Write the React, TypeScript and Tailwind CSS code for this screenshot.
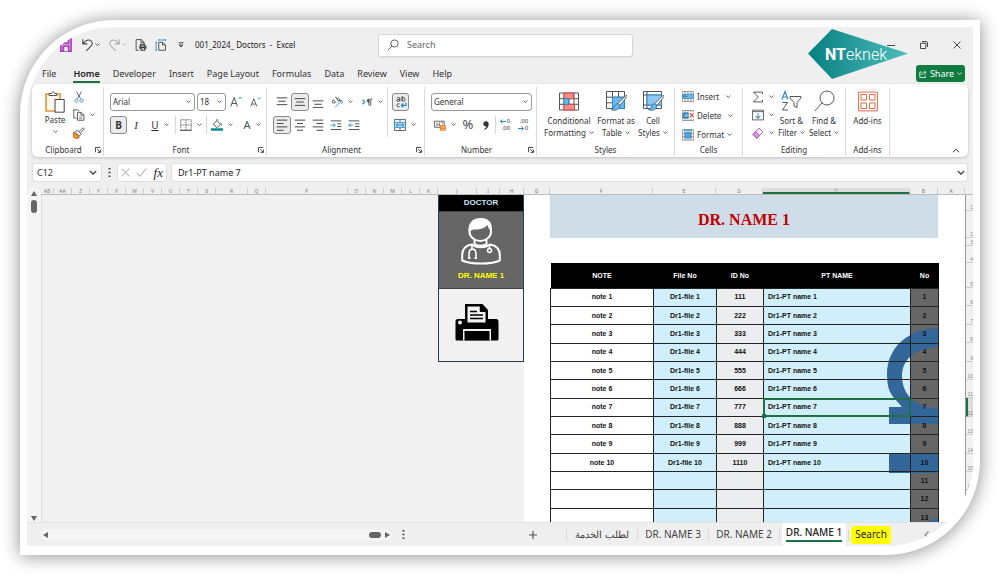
import React, { useState } from "react";

const menuTabs = ["File", "Home", "Developer", "Insert", "Page Layout", "Formulas", "Data", "Review", "View", "Help"];

// Column letters run right to left, P takes up the free space
const columns = [
  { name: "AB", width: "w-[13px]" },
  { name: "AA", width: "w-[18px]" },
  { name: "Z", width: "w-[18px]" },
  { name: "Y", width: "w-[18px]" },
  { name: "X", width: "w-[18px]" },
  { name: "W", width: "w-[18px]" },
  { name: "V", width: "w-[18px]" },
  { name: "U", width: "w-[18px]" },
  { name: "T", width: "w-[18px]" },
  { name: "S", width: "w-[18px]" },
  { name: "R", width: "w-8" },
  { name: "Q", width: "w-[18px]" },
  { name: "P", width: "flex-1" },
  { name: "O", width: "w-[18px]" },
  { name: "N", width: "w-[18px]" },
  { name: "M", width: "w-[18px]" },
  { name: "L", width: "w-[18px]" },
  { name: "K", width: "w-[18px]" },
  { name: "J", width: "w-[39px]" },
  { name: "I", width: "w-[23px]" },
  { name: "H", width: "w-6" },
  { name: "G", width: "w-[26px]" },
  { name: "F", width: "w-[103px]" },
  { name: "E", width: "w-[63px]" },
  { name: "D", width: "w-[47px]" },
  { name: "C", width: "w-[147px]" },
  { name: "B", width: "w-[28px]" },
  { name: "A", width: "w-[27px]" },
];

const topRows = [
  { no: 1, height: "h-4" },
  { no: 2, height: "h-[27px]" },
  { no: 3, height: "h-2" },
  { no: 4, height: "h-[17px]" },
  { no: 5, height: "h-[25px]" },
];

const patients = Array.from({ length: 13 }, (_, i) => {
  const no = i + 1;
  return {
    no,
    note: no <= 10 ? `note ${no}` : "",
    file: no <= 10 ? `Dr1-file ${no}` : "",
    id: no <= 10 ? String(no * 111) : "",
    name: no <= 10 ? `Dr1-PT name ${no}` : "",
  };
});

const Chevron = ({ size = "w-[5px]" }: { size?: string }) => (
  <svg viewBox="0 0 6 4" className={`${size} shrink-0`} fill="none" stroke="#444" strokeWidth="1">
    <path d="M.6.7 3 3 5.4.7" />
  </svg>
);

interface IconProps {
  children: React.ReactNode;
  box?: string;
  size?: string;
}

// Thin line icon, 16 units wide unless told otherwise
const Icon: React.FC<IconProps> = ({ children, box = "0 0 16 16", size = "w-3 h-3" }) => (
  <svg viewBox={box} className={`${size} shrink-0`} fill="none" stroke="#555" strokeWidth="1.2">
    {children}
  </svg>
);

const Lines = ({ d }: { d: string }) => (
  <Icon>
    <path d={d} stroke="#444" strokeWidth="1.3" />
  </Icon>
);

interface ToolProps {
  label: string;
  width?: string;
  active?: boolean;
  children: React.ReactNode;
}

const Tool: React.FC<ToolProps> = ({ label, width = "w-[18px]", active = false, children }) => (
  <button
    type="button"
    aria-label={label}
    className={`${width} h-[18px] flex shrink-0 items-center justify-center gap-[5px] ${
      active ? "rounded-[3px] border border-[#8a8a8a] bg-[#ebebeb]" : ""
    }`}
  >
    {children}
  </button>
);

const Divider = ({ height = "h-[18px]" }: { height?: string }) => (
  <span className={`${height} w-px shrink-0 bg-[#d8d8d8]`} />
);

interface GroupProps {
  title: string;
  width: string;
  launcher?: boolean;
  children: React.ReactNode;
}

const Group: React.FC<GroupProps> = ({ title, width, launcher = false, children }) => (
  <section className={`${width} flex shrink-0 flex-col pt-[3px] pb-px`}>
    <div className="flex-1 min-h-0 flex border-r border-[#dcdcdc]">{children}</div>
    <div className="h-3 shrink-0 flex items-center border-r border-[#dcdcdc]">
      <h2 className="flex-1 text-center whitespace-nowrap">{title}</h2>
      {launcher && (
        <button type="button" aria-label={`${title} settings`} className="w-2">
          <Icon box="0 0 8 8" size="w-[6px] h-[6px]">
            <path d="M.6 7V.6H7M3 3l4 4M7.2 3.5v3.7H3.5" stroke="#333" />
          </Icon>
        </button>
      )}
    </div>
  </section>
);

interface BigToolProps {
  lines: string[];
  chevron?: boolean;
  width: string;
  children: React.ReactNode;
}

const BigTool: React.FC<BigToolProps> = ({ lines, chevron = true, width, children }) => (
  <button type="button" className={`${width} flex shrink-0 flex-col items-center leading-3`}>
    <span className="h-7 flex items-center">{children}</span>
    {lines.map((line, i) => (
      <span key={line} className="flex items-center gap-[3px] whitespace-nowrap">
        {line}
        {chevron && i === lines.length - 1 && <Chevron />}
      </span>
    ))}
  </button>
);

const TitleBar = () => (
  <header className="h-9 shrink-0 flex items-center pl-[33px] text-[8px]">
    <div className="flex items-center gap-2">
      <button type="button" aria-label="Save">
        <svg viewBox="0 0 13 14" className="w-[13px] h-[14px]" fill="#d487de" stroke="#a63fb5" strokeWidth="1.4">
          <path d="M.7 13.2V3.5L3.500.8h7.700v12.400z" />
          <path d="M3.500.8V5h5V.8" fill="#efefef" />
          <path d="M3.500 13.200V8.400h5v4.800" fill="#efefef" />
        </svg>
      </button>
      <button type="button" aria-label="Undo" className="flex items-center gap-px">
        <Icon size="w-[13px] h-[14px]">
          <path d="M2.2 1v5.6h5.6M2.5 6.3C5 3 7.5 1.6 10 1.9c3.4.4 5 4.400 2.800 7L6.500 15.300" stroke="#444" strokeWidth="1.3" />
        </Icon>
        <Chevron />
      </button>
      <button type="button" aria-label="Redo" disabled className="flex items-center gap-px opacity-40">
        <Icon size="w-[13px] h-[14px]">
          <path d="M13.800 1v5.600H8.200M13.500 6.300C11 3 8.500 1.600 6 1.900c-3.400.4-5 4.400-2.800 7l6.300 6.400" stroke="#444" strokeWidth="1.3" />
        </Icon>
        <Chevron />
      </button>
      <button type="button" aria-label="Print preview">
        <Icon size="w-3 h-[14px]">
          <path d="M5 15H1.500V.8h7l3.500 3.400V7M8 1v3.700h3.500" stroke="#444" />
          <path d="M7.500 9V7h5v2M6.500 13V9.300h8V13M8 11.500h5v3.500H8z" stroke="#333" strokeWidth="1.400" />
        </Icon>
      </button>
      <button type="button" aria-label="Page size">
        <Icon size="w-3 h-[14px]">
          <path d="M5 4.500h5l4 3.500v7H5zM10 4.500V8h4" stroke="#444" />
          <path d="M1.500 4v11M.3 4.300h2.500M.3 15h2.500M5 1.300h9M5.200 0v2.600M14 0v2.600" stroke="#2b8bc9" />
        </Icon>
      </button>
      <button type="button" aria-label="Customize toolbar" className="px-[3px]">
        <Icon box="0 0 6 6" size="w-[6px] h-[6px]">
          <path d="M.5.800h5M1 3l2 2 2-2z" stroke="#333" strokeWidth=".9" />
        </Icon>
      </button>
      <h1 className="w-[183px] text-[#222]">001_2024_ Doctors&nbsp; -&nbsp; Excel</h1>
    </div>
    <label className="w-[255px] h-[23px] flex items-center gap-2 rounded-[3px] border border-[#d6d6d6] bg-white px-2 shadow-xs">
      <Icon>
        <circle cx="10" cy="6" r="4.800" />
        <path d="M6.500 9.500 1 15" />
      </Icon>
      <input type="search" aria-label="Search" placeholder="Search" className="w-full text-[9px] outline-none placeholder:text-[#666]" />
    </label>
    <div className="flex-1" />
    <div className="flex items-center">
      <button type="button" aria-label="Minimize" className="w-[33px] flex justify-center">
        <span className="w-2 h-px bg-[#444]" />
      </button>
      <button type="button" aria-label="Restore" className="w-[33px] flex justify-center">
        <Icon box="0 0 8 8" size="w-2 h-2">
          <path d="M.5 2.200h5.300v5.300H.5zM2 .6h4.300Q7.500.6 7.500 2v4" stroke="#333" strokeWidth=".9" />
        </Icon>
      </button>
      <button type="button" aria-label="Close" className="w-[33px] flex justify-center">
        <Icon box="0 0 8 8" size="w-2 h-2">
          <path d="m.5.5 7 7m0-7-7 7" stroke="#333" strokeWidth=".9" />
        </Icon>
      </button>
    </div>
  </header>
);

const MenuBar = () => (
  <nav className="h-[21px] shrink-0 flex items-center justify-between pl-[15px] pr-2 text-[9px] text-[#333]">
    <div className="flex gap-[13px] pt-px">
      {menuTabs.map((tab) => (
        <button key={tab} type="button" className="first:mr-1">
          <span
            className={`block leading-[15px] border-b-2 ${
              tab === "Home" ? "border-[#1e7145] font-semibold text-[#222]" : "border-transparent"
            }`}
          >
            {tab}
          </span>
        </button>
      ))}
    </div>
    <button type="button" className="w-[49px] h-[17px] flex items-center justify-center gap-[3px] rounded-[3px] bg-[#107c41] text-white">
      <svg viewBox="0 0 10 10" className="w-2 h-2" fill="none" stroke="white" strokeWidth="1">
        <path d="M3.500 2.500H1v7h7V7M3 6.500C3.500 4 5 3.200 7 3.200M6 .8l3 2.500-3 2.500" />
      </svg>
      Share
      <svg viewBox="0 0 6 4" className="w-[5px]" fill="none" stroke="white">
        <path d="M.6.7 3 3 5.400.7" />
      </svg>
    </button>
  </nav>
);

const GridIcon = ({ size = "w-5 h-[19px]", children }: { size?: string; children?: React.ReactNode }) => (
  <svg viewBox="0 0 20 18" className={`${size} shrink-0`} fill="none" stroke="#555" strokeWidth="1">
    <path d="M.5.500h19v17H.5zM.5 6.200h19M.5 11.800h19M5 .5v17M15 .5v17M10 .5v17" fill="white" />
    {children}
  </svg>
);

const brush = (
  <g>
    <path d="M20.500 4 12 12.500l2 2L21 5.500z" fill="white" stroke="#555" strokeWidth=".9" />
    <path d="M11.500 12.500C8.500 13 9 17 5.500 18.800c3.500 1 7.500.2 8.500-4z" fill="#6cb8f0" stroke="#3b6f9c" strokeWidth=".9" />
  </g>
);

const Ribbon = () => {
  const [font, setFont] = useState("Arial");
  const [fontSize, setFontSize] = useState("18");
  const [format, setFormat] = useState("General");
  const selectClass = "h-[18px] w-full appearance-none rounded-[3px] border border-[#999] bg-white pl-[2px] outline-none";

  return (
    <div className="mx-[5px] h-[73px] shrink-0 flex rounded-md bg-white text-[8px] text-[#333] shadow-[0_1px_3px_rgba(0,0,0,0.2)]">
      <Group title="Clipboard" width="w-[72px]" launcher>
        <div className="flex pl-[9px] gap-1">
          <button type="button" className="w-7 flex flex-col items-center">
            <svg viewBox="0 0 20 22" className="mt-1 w-5 h-[22px] shrink-0" fill="none">
              <path d="M1 3h14v17H1z" stroke="#e8912d" strokeWidth="1.600" fill="#fff8ee" />
              <path d="M4 4.500V2.500h2.500C7 .3 9.500.3 10 2.500H12v2z" stroke="#555" fill="white" />
              <path d="M10 8.500h9.200v12.700H10z" stroke="#444" fill="white" />
            </svg>
            <span className="leading-3 mt-px">Paste</span>
            <span className="h-3 flex items-center"><Chevron /></span>
          </button>
          <div className="flex flex-col pt-px">
            <Tool label="Cut" width="w-3">
              <Icon>
                <path d="M4.500.8 10 10M11.500.8 6 10" />
                <path d="M4.500 10.500a2.200 2.200 0 1 0 .1 0zM11.500 10.500a2.200 2.200 0 1 0 .1 0z" stroke="#2b8bc9" />
              </Icon>
            </Tool>
            <Tool label="Copy" width="w-[22px]">
              <Icon>
                <path d="M5 12H1V1h5.500l2 2M6 4.500h5l3.500 3.500v7H6zM10.500 4.500V8h4" />
                <path d="M8 10.500h4.500M8 12.700h4.500" strokeWidth=".8" />
              </Icon>
              <Chevron />
            </Tool>
            <Tool label="Format painter" width="w-3">
              <Icon>
                <path d="M1 7.500 8 13l-2.500 2.500L1 13.500z" fill="#f6a04d" stroke="#e07b1c" strokeWidth="2" />
                <path d="M3 6.500 5.500 4l5.500 5.500-2.500 2.500zM8 6l5.500-5 1.500 1.500L10 8" stroke="#555" fill="white" />
              </Icon>
            </Tool>
          </div>
        </div>
      </Group>

      <Group title="Font" width="w-[163px]" launcher>
        <div className="flex flex-col gap-[5px] pl-[6px] pt-[6px]">
          <div className="flex items-center">
            <span className="relative w-[85px]">
              <select aria-label="Font" value={font} onChange={(e) => setFont(e.target.value)} className={selectClass}>
                <option>Arial</option>
                <option>Calibri</option>
              </select>
              <span className="pointer-events-none absolute right-1 top-[7px]"><Chevron /></span>
            </span>
            <span className="relative ml-[2px] w-[29px]">
              <select aria-label="Font size" value={fontSize} onChange={(e) => setFontSize(e.target.value)} className={selectClass}>
                <option>18</option>
                <option>20</option>
              </select>
              <span className="pointer-events-none absolute right-1 top-[7px]"><Chevron /></span>
            </span>
            <Tool label="Increase font size" width="w-5">
              <Icon size="w-3 h-[14px]">
                <path d="m1 14 4.500-12L10 14M2.500 10h6" stroke="#444" />
                <path d="m11.500 4 2-2.500 2 2.500" stroke="#2b8bc9" />
              </Icon>
            </Tool>
            <Tool label="Decrease font size" width="w-[18px]">
              <Icon size="w-[11px] h-3">
                <path d="m1 14.500 4.500-11L10 14.500M2.500 11h6" stroke="#444" />
                <path d="m11.500 1.500 2 2.500 2-2.500" stroke="#2b8bc9" />
              </Icon>
            </Tool>
          </div>
          <div className="flex items-center">
            <Tool label="Bold" active width="w-[17px]"><b className="text-[10px]">B</b></Tool>
            <Tool label="Italic"><i className="font-[Liberation_Serif] text-[11px]">I</i></Tool>
            <Tool label="Underline" width="w-[30px]"><u className="text-[10px]">U</u><Chevron /></Tool>
            <Divider />
            <Tool label="Borders" width="w-[30px]">
              <Icon>
                <path d="M1 1h14v14M1 1v14M8 1v14M1 8h14" stroke="#666" strokeDasharray="2 1" />
                <path d="M.5 15h15" stroke="#333" strokeWidth="1.500" />
              </Icon>
              <Chevron />
            </Tool>
            <Divider />
            <Tool label="Fill color" width="w-[30px]">
              <Icon>
                <path d="M3 7 8 2l4.500 5L8 11.500zM8 2V0" stroke="#444" />
                <path d="M13 5.500c1.500 2 1.500 4 0 4" stroke="#2b8bc9" />
                <path d="M0 14h16" stroke="#0f8b8d" strokeWidth="3.500" />
              </Icon>
              <Chevron />
            </Tool>
            <Tool label="Font color" width="w-[30px]"><span className="text-[11px] text-[#555]">A</span><Chevron /></Tool>
          </div>
        </div>
      </Group>

      <Group title="Alignment" width="w-[158px]" launcher>
        <div className="flex flex-col gap-[5px] pl-[6px] pt-[6px]">
          <div className="flex items-center">
            <Tool label="Top align"><Lines d="M1 2.500h14M3 7h10M1 11.500h14" /></Tool>
            <Tool label="Middle align" active><Lines d="M1 3.500h14M3 8h10M1 12.500h14" /></Tool>
            <Tool label="Bottom align"><Lines d="M1 6.500h14M3 11h10M1 15.500h14" /></Tool>
            <Tool label="Orientation" width="w-[30px]">
              <Icon>
                <path d="M5.500 15 14 6.500M10 6h4.500v4.500" stroke="#2b8bc9" />
                <path d="M3.500 5.500a2 2 0 1 0 2 2.500M3 5l4 4M6 1l4 6M8.500 3.500a2 2 0 1 1 1 3.500" stroke="#444" />
              </Icon>
              <Chevron />
            </Tool>
            <Tool label="Text direction" width="w-[30px]">
              <Icon>
                <path d="m2 5 3 3-3 3" stroke="#2b8bc9" strokeWidth="1.500" />
                <path d="M10.500 13V4M13 13V4h2" stroke="#444" />
                <path d="M10.500 4a2.200 2.200 0 0 0 0 4.500z" fill="#444" />
              </Icon>
              <Chevron />
            </Tool>
          </div>
          <div className="flex items-center">
            <Tool label="Align left" active><Lines d="M1 1.500h14M1 6h9M1 10.500h14M1 15h9" /></Tool>
            <Tool label="Center"><Lines d="M1 1.500h14M4 6h8M1 10.500h14M4 15h8" /></Tool>
            <Tool label="Align right"><Lines d="M1 1.500h14M6 6h9M1 10.500h14M6 15h9" /></Tool>
            <Tool label="Decrease indent">
              <Icon>
                <path d="M1 2.500h14M9.500 6.500H15M9.500 10H15M1 14h14" stroke="#444" />
                <path d="M1 8.200h6M4.500 5.700 7 8.200l-2.500 2.500" stroke="#2b8bc9" />
              </Icon>
            </Tool>
            <Tool label="Increase indent">
              <Icon>
                <path d="M1 2.500h14M9.500 6.500H15M9.500 10H15M1 14h14" stroke="#444" />
                <path d="M1 8.200h6M3.500 5.700 1 8.200l2.500 2.500" stroke="#2b8bc9" />
              </Icon>
            </Tool>
          </div>
        </div>
        <div className="flex-1" />
        <Divider height="h-[50px]" />
        <div className="flex flex-col gap-[5px] w-9 pl-1 pt-[6px]">
          <Tool label="Wrap text" active width="w-[17px]">
            <Icon>
              <path d="M6.500 7V3.500Q6.500 2 4.500 2 3 2 2.500 3M6.500 4.500C4 4.500 2.500 4.500 2.500 6S5 7.500 6.500 5.500M9.500 0v7M9.500 4c0-2.500 4-2.500 4 .500s-4 3-4 .5" stroke="#333" />
              <path d="M6 10.500c-4-1.500-5 4.500 0 4" stroke="#333" />
              <path d="M14.500 9v3.500H8.500M11 10l-2.500 2.500L11 15" stroke="#2b8bc9" strokeWidth="1.600" />
            </Icon>
          </Tool>
          <Tool label="Merge and center" width="w-[26px]">
            <Icon>
              <path d="M.6.600h14.800v14.800H.6zM8 .6v14.800" />
              <path d="M.6 4.500h14.800v7H.6z" fill="#bfe0f7" stroke="#2b8bc9" />
              <path d="M3 8h10M5 6 3 8l2 2M11 6l2 2-2 2" stroke="#1f6fb0" />
            </Icon>
            <Chevron />
          </Tool>
        </div>
      </Group>

      <Group title="Number" width="w-[112px]" launcher>
        <div className="flex-1 flex flex-col gap-[5px] pr-1 pl-[6px] pt-[6px]">
          <span className="relative">
            <select aria-label="Number format" value={format} onChange={(e) => setFormat(e.target.value)} className={selectClass}>
              <option>General</option>
              <option>Number</option>
            </select>
            <span className="pointer-events-none absolute right-1 top-[7px]"><Chevron /></span>
          </span>
          <div className="flex items-center">
            <Tool label="Currency" width="w-7">
              <Icon>
                <path d="M.6 3h13v8H.6zM3 5l2 3-2 1M7 4.500v5M10 5h2" />
                <path d="M8.500 8.500h6.500v6.500H8.500zM8.500 10.700H15M8.500 12.800H15" fill="#fbd3a6" stroke="#e07b1c" />
              </Icon>
              <Chevron />
            </Tool>
            <Tool label="Percent" width="w-[18px]"><span className="text-[13px] text-[#444]">%</span></Tool>
            <Tool label="Comma style" width="w-[18px]">
              <svg viewBox="0 0 6 9" className="w-[6px] h-[9px]" fill="#333">
                <path d="M3 .3C5 .3 5.800 1.800 5.700 3.600 5.500 6 4 8 1.500 8.800L1.200 8C2.600 7.300 3.300 6.300 3.400 5.300 1.500 5.600.3 4.400.3 3 .3 1.500 1.400.3 3 .3z" />
              </svg>
            </Tool>
            <Divider />
            <Tool label="Increase decimal">
              <span className="flex flex-col items-end text-[6px] leading-[7px]">
                <span className="flex items-center gap-px">
                  <svg viewBox="0 0 6 5" className="w-[6px]" fill="none" stroke="#2b8bc9"><path d="M.5 2.500H6M2.500.5l-2 2 2 2" /></svg>
                  0
                </span>
                <span>.00</span>
              </span>
            </Tool>
            <Tool label="Decrease decimal">
              <span className="flex flex-col items-end text-[6px] leading-[7px]">
                <span>.00</span>
                <span className="flex items-center gap-px">
                  <svg viewBox="0 0 6 5" className="w-[6px]" fill="none" stroke="#2b8bc9"><path d="M0 2.500h5.500M3.500.5l2 2-2 2" /></svg>
                  0
                </span>
              </span>
            </Tool>
          </div>
        </div>
      </Group>

      <Group title="Styles" width="w-[138px]">
        <div className="flex pl-1">
          <BigTool lines={["Conditional", "Formatting"]} width="w-14">
            <GridIcon>
              <path d="M5 .5h9.500v5.700H5zM5 11.800h10.500v5.700H5z" fill="#ff8a8a" stroke="#d94343" />
              <path d="M5 6.200h4.500v5.600H5z" fill="#6cb8f0" stroke="#2b8bc9" />
            </GridIcon>
          </BigTool>
          <BigTool lines={["Format as", "Table"]} width="w-[38px]">
            <svg viewBox="0 0 21 20" className="w-[21px] h-5" fill="none" stroke="#555">
              <path d="M.5.500h18v17H.5zM.5 6.200h18M.5 11.800h18M6.500.5v17M12.500.5v17" />
              <path d="M6.500 6.200h12v11.300h-12z" fill="#6cb8f0" stroke="#2b8bc9" />
              {brush}
            </svg>
          </BigTool>
          <BigTool lines={["Cell", "Styles"]} width="w-[36px]">
            <svg viewBox="0 0 21 20" className="w-[21px] h-5" fill="none" stroke="#555">
              <path d="M.5.500h18v17H.5zM.5 4h18M.5 14h18M4 .5v17" />
              <path d="M4 4h14.500v10H4z" fill="#8ec8f5" stroke="#2b8bc9" />
              {brush}
            </svg>
          </BigTool>
        </div>
      </Group>

      <Group title="Cells" width="w-[68px]">
        <div className="flex flex-col items-start pl-[7px]">
          <button type="button" className="h-[19px] flex items-center gap-[3px]">
            <GridIcon size="w-3 h-[11px]">
              <path d="M6 5h13.500v7H6z" fill="#6cb8f0" stroke="#2b8bc9" />
              <path d="M10 8.500H0M4 5 .5 8.500 4 12" stroke="#2b8bc9" strokeWidth="1.800" />
            </GridIcon>
            Insert
            <span className="pl-1"><Chevron /></span>
          </button>
          <button type="button" className="h-[19px] flex items-center gap-[3px]">
            <GridIcon size="w-3 h-[11px]">
              <path d="M3 5h8v8H3z" fill="#6cb8f0" stroke="#1f6fb0" strokeWidth="2" />
              <path d="M11 3h9v12h-9z" fill="white" stroke="none" />
              <path d="m13 5 6.500 7m0-7L13 12" stroke="#e04848" strokeWidth="2" />
            </GridIcon>
            Delete
            <span className="pl-1"><Chevron /></span>
          </button>
          <button type="button" className="h-[19px] flex items-center gap-[3px]">
            <GridIcon size="w-3 h-3">
              <path d="M5 5h10v9H5z" fill="#4ea5e8" stroke="#1f6fb0" />
              <path d="M3 1h14" stroke="#2b8bc9" strokeWidth="2" />
            </GridIcon>
            Format
            <Chevron />
          </button>
        </div>
      </Group>

      <Group title="Editing" width="w-[103px]">
        <div className="flex pl-[7px]">
          <div className="flex flex-col pt-px">
            <Tool label="AutoSum" width="w-[25px]">
              <Icon>
                <path d="M14 4V1.500H2L8.500 8 2 14.500h12V12" stroke="#444" />
              </Icon>
              <Chevron />
            </Tool>
            <Tool label="Fill" width="w-[25px]">
              <Icon>
                <path d="M.6 1.500h14.800v13H.6zM.6 3.500h14.800" />
                <path d="M8 5.500v7M5 9.500l3 3 3-3" stroke="#2b8bc9" strokeWidth="1.400" />
              </Icon>
              <Chevron />
            </Tool>
            <Tool label="Clear" width="w-[25px]">
              <Icon>
                <path d="m1.500 10 8-8.500 5 5-8 8.500z" stroke="#a63fb5" />
                <path d="m1.500 10 3.500-3.800 5 5-3.500 3.800z" fill="#d79be0" stroke="#a63fb5" />
              </Icon>
              <Chevron />
            </Tool>
          </div>
          <BigTool lines={["Sort &", "Filter"]} width="w-[33px]">
            <svg viewBox="0 0 21 22" className="w-[21px] h-[22px]" fill="none" stroke="#555">
              <path d="m1 9.500 3-8 3 8M2 7h4" stroke="#2b8bc9" strokeWidth="1.200" />
              <path d="M1.500 12.500h5l-5 7.500h5.500" />
              <path d="M9 6.500h11v1.500l-4 4.500v5l-3-1.500v-3.500L9 8z" />
            </svg>
          </BigTool>
          <BigTool lines={["Find &", "Select"]} width="w-[32px]">
            <svg viewBox="0 0 21 22" className="w-[21px] h-[22px]" fill="none" stroke="#555">
              <circle cx="13" cy="8" r="7" />
              <path d="M8 13 .8 21" />
            </svg>
          </BigTool>
        </div>
      </Group>

      <Group title="Add-ins" width="w-[44px]">
        <BigTool lines={["Add-ins"]} chevron={false} width="w-[43px]">
          <svg viewBox="0 0 20 20" className="w-5 h-[21px]" fill="none" stroke="#dd6a4a">
            <path d="M.6.600h18.800v18.800H.6z" />
            <path d="M3 3h5.500v5.500H3zM11.500 3H17v5.500h-5.500zM3 11.500h5.500V17H3zM11.500 11.500H17V17h-5.500z" />
          </svg>
        </BigTool>
      </Group>

      <div className="flex-1 flex items-end justify-end pb-1 pr-2">
        <button type="button" aria-label="Collapse ribbon">
          <svg viewBox="0 0 8 5" className="w-2" fill="none" stroke="#444"><path d="m.8 4.200 3.200-3 3.200 3" /></svg>
        </button>
      </div>
    </div>
  );
};

const FormulaBar = () => (
  <div className="h-[31px] shrink-0 flex items-center gap-1 pl-[5px] pr-[5px] text-[9px]">
    <label className="w-[70px] h-[19px] flex items-center rounded-[3px] border border-[#dedede] bg-white px-1">
      <input aria-label="Name box" defaultValue="C12" className="min-w-0 flex-1 text-[#333] outline-none" />
      <Chevron size="w-2" />
    </label>
    <svg viewBox="0 0 2 9" className="w-[7px] h-[9px]" fill="#444">
      <path d="M0 0h2v1.500H0zM0 3.700h2v1.500H0zM0 7.400h2V8.900H0z" />
    </svg>
    <div className="w-[50px] h-[19px] flex items-center justify-between rounded-[3px] border border-[#dedede] bg-white px-[3px]">
      <button type="button" aria-label="Cancel">
        <Icon box="0 0 10 10" size="w-[9px] h-[9px]"><path d="m.7.700 8.600 8.600m0-8.600L.7 9.300" stroke="#bbb" /></Icon>
      </button>
      <button type="button" aria-label="Enter">
        <Icon box="0 0 12 10" size="w-[11px] h-[9px]"><path d="m.7 5.500 3.500 3.500L11.300.700" stroke="#bbb" /></Icon>
      </button>
      <button type="button" aria-label="Insert function" className="font-[Liberation_Serif] text-[13px] leading-4 text-[#222]">
        <i>fx</i>
      </button>
    </div>
    <label className="flex-1 h-[19px] flex items-center rounded-[3px] border border-[#dedede] bg-white pl-[6px] pr-[2px]">
      <input aria-label="Formula" defaultValue="Dr1-PT name 7" className="min-w-0 flex-1 text-[#222] outline-none" />
      <Chevron size="w-2" />
    </label>
  </div>
);

const DoctorCard = () => (
  <aside className="w-[86px] self-start h-[167px] flex flex-col border border-t-0 border-[#1f4058] text-center text-[8px] font-bold">
    <p className="h-4 leading-4 bg-black text-[#c9e4f2]">DOCTOR</p>
    <div className="h-[78px] flex flex-col items-center bg-[#666] border-y border-[#444] pt-[5px] text-[#ff0]">
      <svg viewBox="0 0 40 48" className="w-10 h-12" fill="none" stroke="white" strokeWidth="2">
        <path d="M8.500 11v4c0 4.500 5 9 10.800 9s10.700-4.500 10.700-9v-4" />
        <path d="M8 15C6.500 8 10 1 19.500 1S32 7.500 30.500 14c-2-1-3.500-3-4-6-3.500 3.500-7 4.500-12 4.500-3 0-4.500.5-5.500 2.500z" fill="white" stroke="none" />
        <path d="M13.500 23v4.500c3 1.500 9 1.500 12 0V23" />
        <path d="M11 27.500C4 28.500 1.200 32 1.200 38v5.500C6 46 12 46.500 20 46.500s14-.5 18.800-3V38c0-6-3-9.500-10-10.500-4 3.500-14 3.500-17.800 0z" />
        <path d="M11 27v5M8 40.500V37c0-6.500 7-6.500 7 0v3.500M28.500 27v5" strokeWidth="1.600" />
        <path d="M7 41h2.500M13.500 41H16" strokeWidth="2" />
        <circle cx="28.500" cy="33.500" r="2" strokeWidth="1.500" />
      </svg>
      <button type="button" className="mt-[5px]">DR. NAME 1</button>
    </div>
    <button type="button" aria-label="Print" className="flex-1 flex justify-center pt-[14px]">
      <svg viewBox="0 0 44 38" className="-ml-2 w-11 h-[38px]">
        <path d="M3 16h38a2.500 2.500 0 0 1 2.500 2.500V36a1.500 1.500 0 0 1-1.500 1.500H2A1.500 1.500 0 0 1 .5 36V18.500A2.500 2.500 0 0 1 3 16z" />
        <path d="M8 26h28v11.500H8z" fill="#f1f1f1" />
        <path d="M9.500 28h25v9.500h-25z" />
        <circle cx="5" cy="19.500" r="2" fill="#f1f1f1" />
        <path d="M10 1h17.500L33 7v15H10z" />
        <path d="M12.500 3.500h12.300V9h5.700v10.500H12.500z" fill="#f1f1f1" />
        <path d="M15 8.500h7M15 12h13M15 15.500h13" stroke="black" strokeWidth="1.500" />
      </svg>
    </button>
  </aside>
);

const PatientTable = () => {
  const cell = "border border-[#222] p-0 pt-px h-[18px]";

  return (
    <div className="relative isolate">
      {/* Column fills and watermark lie under the table text and lines */}
      <div className="absolute inset-0 -z-10 flex">
        <div className="w-[103px] bg-white" />
        <div className="w-[63px] bg-[#d0effb]" />
        <div className="w-[47px] bg-[#ebedee]" />
        <div className="w-[147px] bg-[#d0effb]" />
        <div className="flex-1 bg-[#666]" />
      </div>
      <svg viewBox="0 0 52 200" className="absolute right-0 top-[64px] -z-10 w-[52px] h-[200px]" fill="#336699">
        <path d="M52 1C22 2 1 20 1 48c0 12 3 19 8 24l7 8H3v17h49V81c-10 0-19-3-26-9-6-5-10-13-10-23 0-17 14-28 36-29z" />
        <path d="M3 127h49v19H3zM38 198c4-5 8-6 14-6v8H38z" />
      </svg>
      <table className="w-full h-[264px] table-fixed border-collapse text-center text-[7px] font-bold text-[#111]">
        <colgroup>
          <col className="w-[103px]" />
          <col className="w-[63px]" />
          <col className="w-[47px]" />
          <col className="w-[147px]" />
          <col className="w-[28px]" />
        </colgroup>
        <thead>
          <tr className="h-[25px] bg-black text-white">
            <th className="pt-[2px]">NOTE</th>
            <th className="pt-[2px]">File No</th>
            <th className="pt-[2px]">ID No</th>
            <th className="pt-[2px]">PT NAME</th>
            <th className="pt-[2px]">No</th>
          </tr>
        </thead>
        <tbody>
          {patients.map((row) => (
            <tr key={row.no}>
              <td className={cell}>{row.note}</td>
              <td className={cell}>{row.file}</td>
              <td className={cell}>{row.id}</td>
              <td className={`${cell} relative pl-1 text-left`}>
                {row.name}
                {row.no === 7 && (
                  <span className="absolute -inset-px border-2 border-[#1e7145]">
                    <span className="absolute -bottom-[3px] -left-[3px] w-1 h-1 bg-[#1e7145]" />
                  </span>
                )}
              </td>
              <td className={cell}>{row.no}</td>
            </tr>
          ))}
        </tbody>
      </table>
    </div>
  );
};

const RowHeaders = () => (
  <div className="w-2 shrink-0 border-l border-[#999] bg-[#f1f1f1] text-right text-[5px] leading-[5px] text-[#888]">
    {topRows.map((row) => (
      <div key={row.no} className={`${row.height} flex items-end justify-end border-b border-[#ccc]`}>
        {row.no}
      </div>
    ))}
    <div className="h-[239px] flex flex-col">
      {patients.map((row) => (
        <div
          key={row.no}
          className={`flex-1 flex items-end justify-end border-b border-[#ccc] ${
            row.no === 7 ? "border-l-2 border-l-[#1e7145] bg-[#dcdcdc]" : ""
          }`}
        >
          {row.no <= 11 && row.no + 5}
        </div>
      ))}
    </div>
  </div>
);

const Sheet = () => (
  <main className="flex-1 min-h-0 flex">
    <div className="w-[14px] shrink-0 flex flex-col items-center rounded-t-md bg-[#f5f5f5] pt-[3px] pb-px">
      <svg viewBox="0 0 6 5" className="w-[6px] h-[5px]" fill="#666"><path d="M3 0 6 5H0z" /></svg>
      <span className="mt-1 w-[6px] h-[13px] rounded-full bg-[#666]" />
      <span className="flex-1" />
      <svg viewBox="0 0 6 5" className="w-[6px] h-[5px]" fill="#666"><path d="M0 0h6L3 5z" /></svg>
    </div>
    <div className="flex-1 min-w-0 flex flex-col">
      <div className="h-[7px] shrink-0 flex border-b border-[#bbb] pr-2 text-center text-[5px] leading-[6px] text-[#777]">
        {columns.map((col) => (
          <div
            key={col.name}
            className={`${col.width} border-r overflow-hidden ${
              col.name === "C" ? "border-b-2 border-r-[#ccc] border-b-[#1e7145] bg-[#dcdcdc]" : "border-[#ccc]"
            }`}
          >
            {col.name}
          </div>
        ))}
      </div>
      <div className="flex-1 min-h-0 flex overflow-hidden border-l border-[#ddd] bg-[#f1f1f1] font-['Liberation_Sans',sans-serif]">
        <div className="flex-1" />
        <DoctorCard />
        <div className="w-[441px] shrink-0 bg-white pl-[26px] pr-[27px]">
          <h2 className="h-[43px] mb-[25px] flex items-center justify-center bg-[#cfdde8] pt-[6px] font-['Liberation_Serif',serif] text-[16px] font-bold text-[#c00000]">
            DR. NAME 1
          </h2>
          <PatientTable />
        </div>
        <RowHeaders />
      </div>
    </div>
  </main>
);

const SheetTabs = () => (
  <footer className="h-6 shrink-0 flex items-center border-t border-[#e2e2e2] bg-[#efefef] text-[10px] text-[#444]">
    <div className="ml-[14px] flex-1 h-3 flex items-center gap-1 rounded-full bg-[#f5f5f5] px-[2px]">
      <svg viewBox="0 0 5 6" className="w-[5px] h-[6px]" fill="#666"><path d="M5 0v6L0 3z" /></svg>
      <span className="flex-1" />
      <span className="w-3 h-[6px] rounded-full bg-[#666]" />
      <svg viewBox="0 0 5 6" className="w-[5px] h-[6px]" fill="#666"><path d="M0 0v6l5-3z" /></svg>
    </div>
    <svg viewBox="0 0 2 9" className="mx-2 w-[7px] h-[9px]" fill="#444">
      <path d="M0 0h2v1.500H0zM0 3.700h2v1.500H0zM0 7.400h2V8.900H0z" />
    </svg>
    <div className="w-[558px] shrink-0 flex items-center">
      <button type="button" aria-label="New sheet" className="ml-[114px] w-2">
        <Icon box="0 0 8 8" size="w-2 h-2"><path d="M4 0v8M0 4h8" /></Icon>
      </button>
      <span className="w-[29px]" />
      <Divider height="h-3" />
      <button type="button" lang="ar" dir="rtl" className="w-[70px] whitespace-nowrap">لطلب الخدمة</button>
      <Divider height="h-3" />
      <button type="button" className="w-[70px] whitespace-nowrap">DR. NAME 3</button>
      <Divider height="h-3" />
      <button type="button" className="w-[70px] whitespace-nowrap">DR. NAME 2</button>
      <Divider height="h-3" />
      <button type="button" className="mx-[2px] w-16 h-[23px] flex justify-center rounded-[3px] bg-white font-medium text-[#222] whitespace-nowrap shadow-xs">
        <span className="h-[19px] border-b-2 border-[#1e7145] leading-[18px]">DR. NAME 1</span>
      </button>
      <Divider height="h-3" />
      <button type="button" className="ml-[2px] w-10 h-[18px] rounded-[3px] bg-[#ff0] text-[#222]">Search</button>
      <button type="button" aria-label="Previous sheets" className="ml-[33px]">
        <Icon box="0 0 5 8" size="w-[5px] h-2"><path d="M4.500.500 1 4l3.500 3.500" stroke="#888" /></Icon>
      </button>
    </div>
  </footer>
);

const App: React.FC = () => (
  <div className="relative h-screen flex flex-col bg-white p-5 font-['Noto_Sans',sans-serif]">
    <div className="flex-1 min-h-0 flex flex-col overflow-hidden rounded-tl-[94px] rounded-br-[94px] border-[7px] border-b-[9px] border-white bg-[#efefef] shadow-[0_1px_18px_rgba(0,0,0,0.45)]">
      <TitleBar />
      <MenuBar />
      <Ribbon />
      <FormulaBar />
      <Sheet />
      <SheetTabs />
    </div>

    {/* Logo badge laid over the window corner */}
    <svg viewBox="0 0 100 52" className="absolute right-[92px] top-7 w-[100px] h-[52px]">
      <defs>
        <linearGradient id="badge" x1="0" x2="1">
          <stop offset="0" stopColor="#07807f" />
          <stop offset="1" stopColor="#4fbcbd" />
        </linearGradient>
      </defs>
      <path d="M0 25.500 24 1l76 24.500L24 51z" fill="url(#badge)" />
      <text x="17" y="32" fill="white" fontSize="16" fontFamily="Roboto, sans-serif">
        <tspan fontWeight="700">NT</tspan>
        <tspan fontWeight="300">eknek</tspan>
      </text>
    </svg>
  </div>
);

export default App;
